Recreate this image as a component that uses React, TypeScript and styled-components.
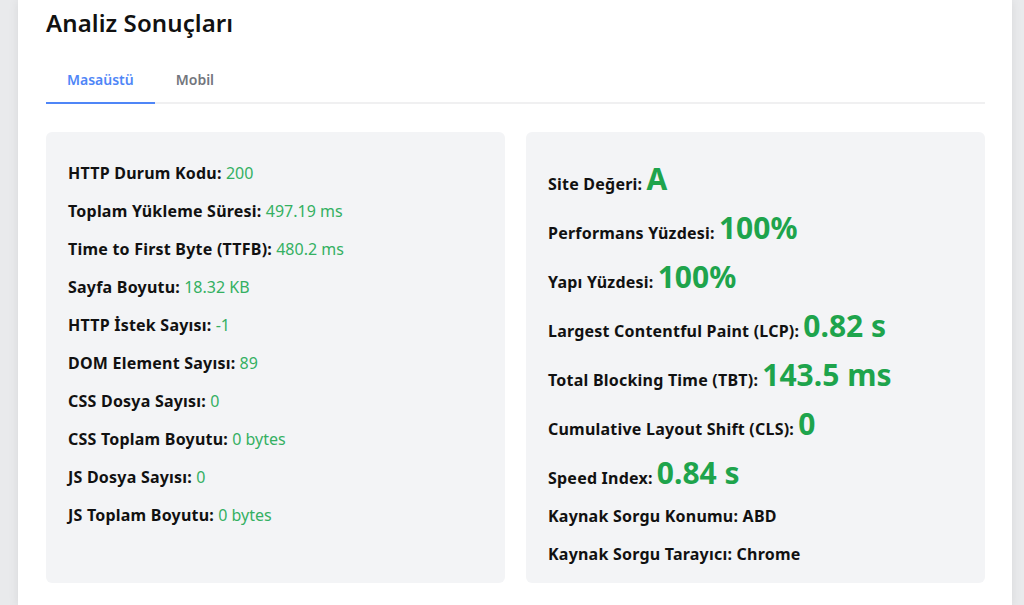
import React, { useState } from "react";
import styled, { createGlobalStyle } from "styled-components";

const GlobalStyle = createGlobalStyle`
  html, body {
    margin: 0;
    padding: 0;
    background: #e9eaec;
    font-family: "Noto Sans", "Open Sans", sans-serif;
    color: #111;
  }
`;

const Page = styled.div`
  display: flex;
  padding: 0 12px 0 18px;
  min-height: 605px;
  box-sizing: border-box;
`;

const Card = styled.section`
  flex: 1;
  background: #ffffff;
  padding: 7px 27px 24px 28px;
  box-shadow: 0 0 10px rgba(0, 0, 0, 0.08);
`;

const Title = styled.h2`
  margin: 0;
  font-size: 24px;
  line-height: 32px;
  font-weight: 600;
  letter-spacing: 0.1px;
  color: #111;
`;

const Tabs = styled.div`
  display: flex;
  margin-top: 20px;
  border-bottom: 2px solid #f0f0f1;
`;

const Tab = styled.button<{ $active?: boolean }>`
  border: none;
  background: none;
  font-family: inherit;
  font-size: 14px;
  font-weight: 600;
  line-height: 20px;
  padding: 11px 21px 12px;
  margin-bottom: -2px;
  cursor: pointer;
  color: ${(p) => (p.$active ? "#4f86f7" : "#73767d")};
  border-bottom: 2px solid ${(p) => (p.$active ? "#4f86f7" : "transparent")};
`;

const Grid = styled.div`
  display: grid;
  grid-template-columns: 1fr 1fr;
  gap: 21px;
  margin-top: 28px;
`;

const Panel = styled.div`
  background: #f3f4f6;
  border-radius: 6px;
  padding: 29px 22px 17px;
  display: flex;
  flex-direction: column;
  gap: 14px;
`;

const Row = styled.p`
  margin: 0;
  font-size: 16px;
  line-height: 24px;
  color: #111;
`;

const Label = styled.span`
  font-weight: 700;
  letter-spacing: 0.22px;
`;

const Value = styled.span`
  font-weight: 400;
  color: #34b062;
`;

const BigValue = styled.span`
  font-size: 30px;
  line-height: 35px;
  font-weight: 700;
  color: #1ea44c;
`;

const leftRows = [
  ["HTTP Durum Kodu:", "200"],
  ["Toplam Yükleme Süresi:", "497.19 ms"],
  ["Time to First Byte (TTFB):", "480.2 ms"],
  ["Sayfa Boyutu:", "18.32 KB"],
  ["HTTP İstek Sayısı:", "-1"],
  ["DOM Element Sayısı:", "89"],
  ["CSS Dosya Sayısı:", "0"],
  ["CSS Toplam Boyutu:", "0 bytes"],
  ["JS Dosya Sayısı:", "0"],
  ["JS Toplam Boyutu:", "0 bytes"],
];

const scoreRows = [
  ["Site Değeri:", "A"],
  ["Performans Yüzdesi:", "100%"],
  ["Yapı Yüzdesi:", "100%"],
  ["Largest Contentful Paint (LCP):", "0.82 s"],
  ["Total Blocking Time (TBT):", "143.5 ms"],
  ["Cumulative Layout Shift (CLS):", "0"],
  ["Speed Index:", "0.84 s"],
];

const sourceRows = [
  ["Kaynak Sorgu Konumu:", "ABD"],
  ["Kaynak Sorgu Tarayıcı:", "Chrome"],
];

const App = () => {
  const [tab, setTab] = useState("desktop");

  return (
    <>
      <GlobalStyle />
      <Page>
        <Card>
          <Title>Analiz Sonuçları</Title>
          <Tabs>
            <Tab $active={tab === "desktop"} onClick={() => setTab("desktop")}>
              Masaüstü
            </Tab>
            <Tab $active={tab === "mobile"} onClick={() => setTab("mobile")}>
              Mobil
            </Tab>
          </Tabs>
          <Grid>
            <Panel>
              {leftRows.map(([label, value]) => (
                <Row key={label}>
                  <Label>{label}</Label> <Value>{value}</Value>
                </Row>
              ))}
            </Panel>
            <Panel>
              {scoreRows.map(([label, value]) => (
                <Row key={label}>
                  <Label>{label}</Label> <BigValue>{value}</BigValue>
                </Row>
              ))}
              {sourceRows.map(([label, value]) => (
                <Row key={label}>
                  <Label>
                    {label} {value}
                  </Label>
                </Row>
              ))}
            </Panel>
          </Grid>
        </Card>
      </Page>
    </>
  );
};

export default App;
